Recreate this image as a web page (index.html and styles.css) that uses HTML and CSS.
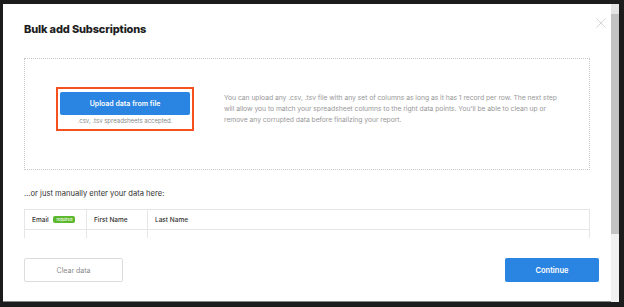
FILE: index.html
```html
<!DOCTYPE html>
<html lang="en">
<head>
    <meta charset="UTF-8">
    <meta name="viewport" content="width=device-width, initial-scale=1.0">
    <title>Bulk add Subscriptions</title>
    <link rel="stylesheet" href="styles.css">
</head>
<body>
    <div class="screen">
        <div class="modal">
            <button class="close" aria-label="Close">
                <svg width="10" height="10" viewBox="0 0 10 10"><path d="M0.5 0.5 L9.5 9.5 M9.5 0.5 L0.5 9.5" stroke="#d6d6d6" stroke-width="1"/></svg>
            </button>
            <div class="modal-body">
                <h1>Bulk add Subscriptions</h1>

                <div class="dropzone">
                    <div class="upload">
                        <button class="btn-primary upload-btn">Upload data from file</button>
                        <div class="accepted">.csv, .tsv spreadsheets accepted.</div>
                    </div>
                    <p class="help">You can upload any .csv, .tsv file with any set of columns as long as it has 1 record per row. The next step will allow you to match your spreadsheet columns to the right data points. You'll be able to clean up or remove any corrupted data before finalizing your report.</p>
                </div>

                <p class="manual">...or just manually enter your data here:</p>

                <table class="grid">
                    <thead>
                        <tr>
                            <th class="col-email">Email <span class="badge">required</span></th>
                            <th class="col-first">First Name</th>
                            <th>Last Name</th>
                        </tr>
                    </thead>
                    <tbody>
                        <tr><td></td><td></td><td></td></tr>
                    </tbody>
                </table>
            </div>
            <div class="modal-footer">
                <button class="btn-secondary">Clear data</button>
                <button class="btn-primary continue">Continue</button>
            </div>
        </div>
        <div class="scrollbar">
            <div class="arrow"></div>
            <div class="thumb"></div>
        </div>
    </div>
</body>
</html>
```

FILE: styles.css
```css
body {
    margin: 0;
    background-color: #1c1c1c;
    font-family: Inter, "Liberation Sans", Arial, sans-serif;
    color: #222;
}
.screen {
    display: flex;
    height: 307px;
    padding: 4px 5px 0 3px;
    box-sizing: border-box;
}
.modal {
    position: relative;
    width: 608px;
    height: 298px;
    background-color: #fff;
    display: flex;
    flex-direction: column;
    border-bottom: 1px solid #8a8a8a;
    box-sizing: border-box;
}
.close {
    position: absolute;
    top: 14px;
    right: 5px;
    padding: 0;
    border: none;
    background: none;
    line-height: 0;
}
.modal-body {
    height: 234px;
    overflow: hidden;
    padding: 0 21px;
}
h1 {
    margin: 18px 0 0;
    font-size: 11px;
    font-weight: 800;
    line-height: 14px;
    letter-spacing: -0.15px;
    color: #1e1e1e;
}
.dropzone {
    display: flex;
    align-items: flex-start;
    margin-top: 22px;
    height: 112px;
    padding: 28px 30px 0 31px;
    border: 1px dotted #c8c8c8;
    box-sizing: border-box;
}
.upload {
    width: 130px;
    height: 37px;
    padding: 3px 2px 0;
    border: 2px solid #f4511e;
    flex-shrink: 0;
    box-sizing: content-box;
    text-align: center;
}
.btn-primary {
    background-color: #2a84e2;
    color: #fff;
    border: none;
    border-radius: 2px;
    font-family: inherit;
    font-weight: 600;
    cursor: pointer;
}
.upload-btn {
    display: block;
    width: 130px;
    height: 23px;
    margin: 0 auto;
    font-size: 7px;
}
.accepted {
    margin-top: 1px;
    font-size: 6px;
    line-height: 9px;
    color: #8a8a8a;
}
.help {
    margin: 5px 0 0 30px;
    font-size: 6.8px;
    line-height: 11px;
    letter-spacing: -0.05px;
    color: #999;
}
.manual {
    margin: 18px 0 0;
    font-size: 7.6px;
    line-height: 11px;
    color: #333;
}
.grid {
    width: 100%;
    margin-top: 10px;
    border-collapse: collapse;
    font-size: 6.5px;
}
.grid th,
.grid td {
    border: 1px solid #e6e6e6;
    height: 19px;
    padding: 0 7px;
    text-align: left;
    font-weight: 500;
    color: #333;
}
.grid td {
    border-bottom: none;
}
.grid .col-email {
    width: 47px;
}
.grid .col-first {
    width: 46px;
}
.badge {
    display: inline-block;
    padding: 1px 3px;
    margin-left: 3px;
    background-color: #5cb82c;
    color: #fff;
    border-radius: 2px;
    font-size: 4px;
    line-height: 5px;
    vertical-align: 1px;
}
.modal-footer {
    display: flex;
    justify-content: space-between;
    align-items: center;
    padding: 20px 12px 0 21px;
}
.btn-secondary {
    width: 99px;
    height: 24px;
    background-color: #fff;
    border: 1px solid #dcdcdc;
    border-radius: 2px;
    font-family: inherit;
    font-size: 7px;
    color: #8a8a8a;
}
.continue {
    width: 94px;
    height: 24px;
    font-size: 7.5px;
}
.scrollbar {
    width: 8px;
    height: 298px;
    background-color: #f1f1f1;
    display: flex;
    flex-direction: column;
}
.arrow {
    height: 10px;
    background-color: #e4e4e4;
}
.thumb {
    height: 220px;
    background-color: #c2c2c2;
}
```
